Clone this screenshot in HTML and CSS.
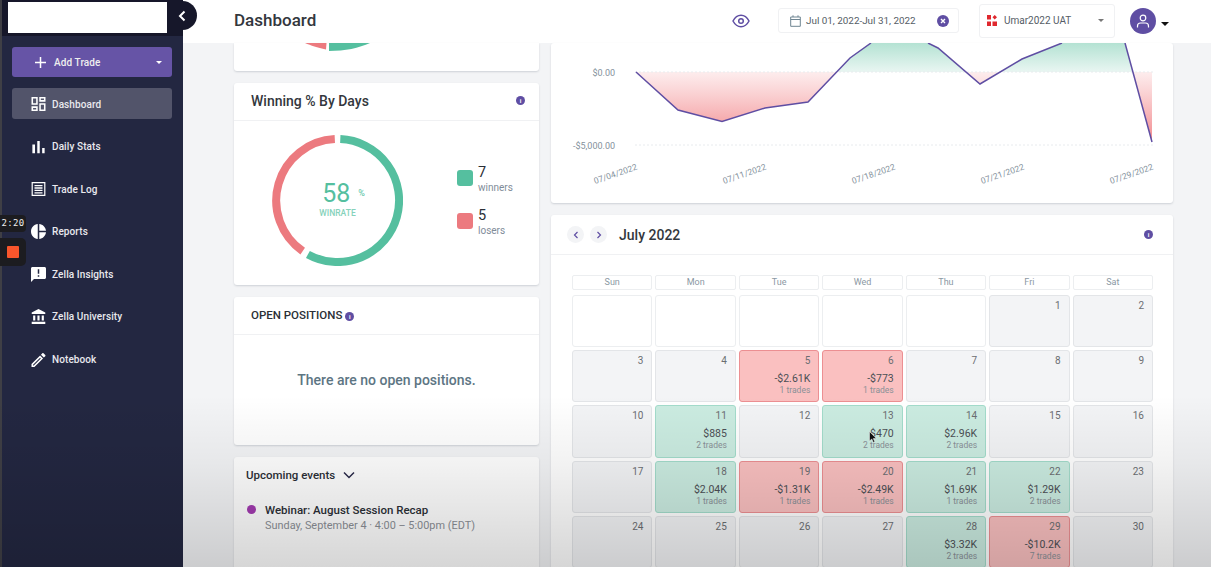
FILE: index.html
```html
<!DOCTYPE html>
<html lang="en">
<head>
  <meta charset="UTF-8">
  <title>Dashboard</title>
  <link rel="stylesheet" href="styles.css">
</head>
<body>
  <div class="app">
    <aside class="sidebar">
      <div class="brand">
        <div class="logo"></div>
        <button class="collapse">
          <svg width="10" height="12" viewBox="0 0 10 12"><path d="M7.5 1.5 3 6l4.500 4.500" fill="none" stroke="#fff" stroke-width="2"/></svg>
        </button>
      </div>
      <nav class="nav">
        <div class="add-trade">
          <svg width="11" height="11" viewBox="0 0 11 11"><path d="M5.500 0v11M0 5.500h11" stroke="#fff" stroke-width="1.500"/></svg>
          <span>Add Trade</span>
          <i class="caret"></i>
        </div>
        <a class="nav-item active">
          <svg width="14" height="14" viewBox="3 3 18 18" class="nav-icon"><path d="M19 5v2h-4V5h4M9 5v6H5V5h4m10 8v6h-4v-6h4M9 17v2H5v-2h4M21 3h-8v6h8V3zM11 3H3v10h8V3zm10 8h-8v10h8V11zm-10 4H3v6h8v-6z" fill="#fff"/></svg>
          Dashboard
        </a>
        <a class="nav-item">
          <svg width="14" height="14" viewBox="4 4 16 16" class="nav-icon"><path d="M5 9.200h3V19H5zM10.600 5h2.800v14h-2.800zm5.600 8H19v6h-2.800z" fill="#fff"/></svg>
          Daily Stats
        </a>
        <a class="nav-item">
          <svg width="14" height="14" viewBox="0 0 14 14" class="nav-icon"><path d="M.7.7h12.600v12.600H.7z" fill="none" stroke="#fff" stroke-width="1.200"/><path d="M3 3.600h8M3 6h8M3 8.400h8M3 10.800h8" stroke="#fff" stroke-width="1.300"/></svg>
          Trade Log
        </a>
        <a class="nav-item">
          <svg width="15" height="15" viewBox="2 2 20 20" class="nav-icon"><path d="M11 2v20c-5.070-.500-9-4.790-9-10s3.930-9.500 9-10zm2.030 0v8.990H22c-.470-4.740-4.240-8.520-8.970-8.990zm0 11.010V22c4.740-.470 8.500-4.250 8.970-8.990h-8.970z" fill="#fff"/></svg>
          Reports
        </a>
        <a class="nav-item">
          <svg width="15" height="15" viewBox="2 2 20 20" class="nav-icon"><path d="M20 2H4c-1.100 0-1.990.900-1.990 2L2 22l4-4h14c1.100 0 2-.900 2-2V4c0-1.100-.900-2-2-2zm-7 9h-2V5h2v6zm0 4h-2v-2h2v2z" fill="#fff"/></svg>
          Zella Insights
        </a>
        <a class="nav-item">
          <svg width="15" height="15" viewBox="2 1 19 21" class="nav-icon"><path d="M4 10v7h3v-7H4zm6 0v7h3v-7h-3zM2 22h19v-3H2v3zm14-12v7h3v-7h-3zm-4.500-9L2 6v2h19V6l-9.500-5z" fill="#fff"/></svg>
          Zella University
        </a>
        <a class="nav-item">
          <svg width="14" height="14" viewBox="3 3 18 18" class="nav-icon"><path d="M14.060 9.020l.920.920L5.920 19H5v-.920l9.060-9.060M17.660 3c-.250 0-.510.100-.700.290l-1.830 1.830 3.750 3.750 1.830-1.830c.390-.390.390-1.020 0-1.410l-2.340-2.340c-.200-.200-.450-.290-.710-.290zm-3.600 3.190L3 17.250V21h3.750L17.810 9.940l-3.750-3.750z" fill="#fff"/></svg>
          Notebook
        </a>
      </nav>
    </aside>

    <div class="main">
      <header class="topbar">
        <h1>Dashboard</h1>
        <svg class="eye" width="18" height="14" viewBox="0 0 18 14"><path d="M1 7c2-3.800 4.800-5.700 8-5.700S15 3.200 17 7c-2 3.800-4.800 5.700-8 5.700S3 10.800 1 7z" fill="none" stroke="#5f4ea3" stroke-width="1.500"/><circle cx="9" cy="7" r="2.300" fill="none" stroke="#5f4ea3" stroke-width="1.500"/></svg>
        <div class="date-range">
          <svg width="11" height="12" viewBox="0 0 11 12"><path d="M.7 2h9.600v9.300H.7zM.7 4.500h9.600M3 .3V2M8 .3V2" fill="none" stroke="#6f8592" stroke-width="1"/></svg>
          <span>Jul 01, 2022-Jul 31, 2022</span>
          <svg class="clear" width="12" height="12" viewBox="0 0 12 12"><circle cx="6" cy="6" r="6" fill="#5f4ea3"/><path d="m4 4 4 4M8 4 4 8" stroke="#fff" stroke-width="1.400"/></svg>
        </div>
        <div class="account">
          <svg width="10" height="11" viewBox="0 0 10 11"><path d="M0 0h4v4.500H0zM0 6.500h4V11H0zM5.500 6.500H10V11H5.500zM7.700 0 10 2.300 7.700 4.600 5.500 2.300z" fill="#e0282e"/></svg>
          <span>Umar2022 UAT</span>
          <i class="caret dark"></i>
        </div>
        <div class="avatar">
          <svg width="14" height="14" viewBox="0 0 14 14"><circle cx="7" cy="4" r="2.800" fill="none" stroke="#fff" stroke-width="1.200"/><path d="M1.500 13.500V12c0-2 1.500-3 3-3h5c1.500 0 3 1 3 3v1.500" fill="none" stroke="#fff" stroke-width="1.200"/></svg>
        </div>
        <i class="caret black"></i>
      </header>

      <div class="content">
        <section class="col-left">
          <div class="card donut-tail">
            <svg width="305" height="8" viewBox="0 0 305 8"><path d="M95 8c16 0 30-3 41-8H95z" fill="#55bf9f"/><path d="M71 0c6 2.700 12 4.500 21 6.500l.5-6.500z" fill="#ec7a7f"/></svg>
          </div>

          <div class="card winning">
            <div class="card-head">
              <h2>Winning % By Days</h2>
              <i class="info">i</i>
            </div>
            <div class="winning-body">
              <div class="donut">
                <svg width="131" height="131" viewBox="0 0 131 131">
                  <path d="M68.300 4.100A61.500 61.500 0 1 1 35.900 119.400" fill="none" stroke="#55bf9f" stroke-width="8"/>
                  <path d="M30.700 116.100A61.500 61.500 0 0 1 62.800 4.100" fill="none" stroke="#ec7a7f" stroke-width="8"/>
                </svg>
                <div class="donut-label">
                  <div class="rate">58<small>%</small></div>
                  <div class="rate-name">WINRATE</div>
                </div>
              </div>
              <div class="legend">
                <div class="legend-row">
                  <i class="swatch green"></i>
                  <div><b>7</b><span>winners</span></div>
                </div>
                <div class="legend-row">
                  <i class="swatch red"></i>
                  <div><b>5</b><span>losers</span></div>
                </div>
              </div>
            </div>
          </div>

          <div class="card positions">
            <div class="card-head">
              <h3>OPEN POSITIONS <i class="info">i</i></h3>
            </div>
            <p class="empty">There are no open positions.</p>
          </div>

          <div class="card events">
            <div class="events-head">
              Upcoming events
              <svg width="12" height="8" viewBox="0 0 12 8"><path d="m1 1.500 5 5 5-5" fill="none" stroke="#2a2a4a" stroke-width="1.500"/></svg>
            </div>
            <div class="event">
              <i class="dot"></i>
              <div>
                <div class="event-name">Webinar: August Session Recap</div>
                <div class="event-time">Sunday, September 4 · 4:00 – 5:00pm (EDT)</div>
              </div>
            </div>
          </div>
        </section>

        <section class="col-right">
          <div class="card chart">
            <svg width="622" height="160" viewBox="0 0 622 160">
              <defs>
                <linearGradient id="redFill" gradientUnits="userSpaceOnUse" x1="0" y1="29" x2="0" y2="95">
                  <stop offset="0" stop-color="#f6a3a6" stop-opacity=".2"/>
                  <stop offset="1" stop-color="#f28f93"/>
                </linearGradient>
                <linearGradient id="greenFill" gradientUnits="userSpaceOnUse" x1="0" y1="0" x2="0" y2="29">
                  <stop offset="0" stop-color="#b4e2d3"/>
                  <stop offset="1" stop-color="#e9f6f2"/>
                </linearGradient>
              </defs>
              <path d="M85 29 127 67 171 78.500 214 65 257 59 286 29z" fill="url(#redFill)"/>
              <path d="M415 29 429 41 449 29zM582 29 601 99V29z" fill="url(#redFill)"/>
              <path d="M286 29 299 15 320 0H377L387 5 415 29zM449 29 471 16 511 0H574L582 29z" fill="url(#greenFill)"/>
              <path d="M84 29H602M84 102H602" stroke="#e8ebee" stroke-dasharray="2 2"/>
              <path d="M85 29 127 67 171 78.500 214 65 257 59 299 15 320 0M377 0 387 5 429 41 471 16 511 0M574 0 601 99" fill="none" stroke="#5f4ea3" stroke-width="1.500"/>
              <text x="64" y="33" text-anchor="end" class="axis">$0.00</text>
              <text x="64" y="106" text-anchor="end" class="axis">-$5,000.00</text>
              <text transform="translate(44 141) rotate(-19)" class="axis date">07/04/2022</text>
              <text transform="translate(173 141) rotate(-19)" class="axis date">07/11/2022</text>
              <text transform="translate(302 141) rotate(-19)" class="axis date">07/18/2022</text>
              <text transform="translate(431 141) rotate(-19)" class="axis date">07/21/2022</text>
              <text transform="translate(560 141) rotate(-19)" class="axis date">07/29/2022</text>
            </svg>
          </div>

          <div class="card calendar">
            <div class="cal-head">
              <button class="cal-nav"><svg width="6" height="8" viewBox="0 0 6 8"><path d="M4.500 1 1.500 4l3 3" fill="none" stroke="#5f4ea3" stroke-width="1.200"/></svg></button>
              <button class="cal-nav"><svg width="6" height="8" viewBox="0 0 6 8"><path d="m1.500 1 3 3-3 3" fill="none" stroke="#5f4ea3" stroke-width="1.200"/></svg></button>
              <h2>July 2022</h2>
              <i class="info">i</i>
            </div>
            <div class="cal-grid">
              <div class="dow">Sun</div><div class="dow">Mon</div><div class="dow">Tue</div><div class="dow">Wed</div><div class="dow">Thu</div><div class="dow">Fri</div><div class="dow">Sat</div>

              <div class="day blank"></div><div class="day blank"></div><div class="day blank"></div><div class="day blank"></div><div class="day blank"></div>
              <div class="day"><span class="num">1</span></div>
              <div class="day"><span class="num">2</span></div>

              <div class="day"><span class="num">3</span></div>
              <div class="day"><span class="num">4</span></div>
              <div class="day loss"><span class="num">5</span><span class="pnl">-$2.61K</span><span class="trades">1 trades</span></div>
              <div class="day loss"><span class="num">6</span><span class="pnl">-$773</span><span class="trades">1 trades</span></div>
              <div class="day"><span class="num">7</span></div>
              <div class="day"><span class="num">8</span></div>
              <div class="day"><span class="num">9</span></div>

              <div class="day"><span class="num">10</span></div>
              <div class="day win"><span class="num">11</span><span class="pnl">$885</span><span class="trades">2 trades</span></div>
              <div class="day"><span class="num">12</span></div>
              <div class="day win"><span class="num">13</span><span class="pnl">$470</span><span class="trades">2 trades</span></div>
              <div class="day win"><span class="num">14</span><span class="pnl">$2.96K</span><span class="trades">2 trades</span></div>
              <div class="day"><span class="num">15</span></div>
              <div class="day"><span class="num">16</span></div>

              <div class="day"><span class="num">17</span></div>
              <div class="day win"><span class="num">18</span><span class="pnl">$2.04K</span><span class="trades">1 trades</span></div>
              <div class="day loss"><span class="num">19</span><span class="pnl">-$1.31K</span><span class="trades">1 trades</span></div>
              <div class="day loss"><span class="num">20</span><span class="pnl">-$2.49K</span><span class="trades">1 trades</span></div>
              <div class="day win"><span class="num">21</span><span class="pnl">$1.69K</span><span class="trades">1 trades</span></div>
              <div class="day win"><span class="num">22</span><span class="pnl">$1.29K</span><span class="trades">2 trades</span></div>
              <div class="day"><span class="num">23</span></div>

              <div class="day"><span class="num">24</span></div>
              <div class="day"><span class="num">25</span></div>
              <div class="day"><span class="num">26</span></div>
              <div class="day"><span class="num">27</span></div>
              <div class="day win"><span class="num">28</span><span class="pnl">$3.32K</span><span class="trades">2 trades</span></div>
              <div class="day loss"><span class="num">29</span><span class="pnl">-$10.2K</span><span class="trades">7 trades</span></div>
              <div class="day"><span class="num">30</span></div>
            </div>
            <svg class="cursor" width="8" height="12" viewBox="0 0 8 12"><path d="M.5.500v9.500l2.300-2 1.500 3.500 1.500-.700-1.500-3.300H7.300z" fill="#111" stroke="#fff" stroke-width=".5"/></svg>
          </div>
        </section>
      </div>
    </div>

    <div class="fade"></div>

    <div class="recorder">
      <span class="rec-time">2:20</span>
      <span class="rec-stop"><i></i></span>
    </div>
  </div>
</body>
</html>
```

FILE: styles.css
```css
html, body {
  margin: 0;
  padding: 0;
  height: 100%;
  overflow: hidden;
  font-family: Roboto, "Noto Sans", sans-serif;
  color: #2b2f36;
  background-color: #f3f4f6;
}

.app {
  position: relative;
  display: flex;
  height: 567px;
}

h1, h2, h3, p {
  margin: 0;
  font-weight: 400;
}

button {
  border: none;
  padding: 0;
}

/* sidebar */
.sidebar {
  position: relative;
  width: 181px;
  flex: none;
  border-left: 2px solid #3f3f45;
  background-color: #232741;
  z-index: 2;
}

.brand {
  position: relative;
  height: 36px;
  padding: 2px 0 0 6px;
  box-sizing: border-box;
  background-color: #16172a;
}

.logo {
  width: 159px;
  height: 31px;
  background-color: #fff;
}

.collapse {
  position: absolute;
  top: 1px;
  right: -14px;
  width: 30px;
  height: 29px;
  border-radius: 0 15px 15px 0;
  background-color: #16172a;
  display: flex;
  align-items: center;
  justify-content: center;
}

.nav {
  padding: 11px 11px 0 10px;
}

.add-trade {
  display: flex;
  align-items: center;
  height: 30px;
  padding-left: 23px;
  margin-bottom: 11px;
  border-radius: 3px;
  background-color: #6654a6;
  color: #eee;
  font-size: 10px;
  font-weight: 500;
}

.add-trade svg {
  margin-right: 8px;
}

.add-trade span {
  flex: 1;
  letter-spacing: .1px;
}

.caret {
  display: inline-block;
  width: 0;
  height: 0;
  border: 3px solid transparent;
  border-top-color: #fff;
  border-bottom: 0;
  margin-right: 10px;
}

.caret.dark {
  border-top-color: #777;
  margin: 0;
}

.caret.black {
  border-width: 4px 4px 0;
  border-top-color: #111;
  margin: 4px 0 0 5px;
}

.nav-item {
  display: flex;
  align-items: center;
  height: 31px;
  box-sizing: border-box;
  padding: 1px 0 0 19px;
  margin-bottom: 11.6px;
  border-radius: 3px;
  color: #e9e9ee;
  font-size: 10px;
  font-weight: 500;
  letter-spacing: .1px;
}

.nav-item.active {
  background-color: #52546a;
}

.nav-icon {
  width: 15px;
  margin-right: 6px;
}

.recorder {
  position: absolute;
  left: 0;
  top: 215px;
  width: 26px;
  z-index: 4;
}

.rec-time {
  display: block;
  height: 17px;
  border-radius: 0 4px 4px 0;
  background-color: #1c1c20;
  color: #eee;
  font-family: "DejaVu Sans Mono", monospace;
  font-size: 9px;
  line-height: 17px;
  text-align: center;
  letter-spacing: .3px;
}

.rec-stop {
  display: flex;
  align-items: center;
  justify-content: center;
  height: 28px;
  margin-top: 6px;
  padding-right: 1px;
  border-radius: 0 5px 5px 0;
  background-color: #1c1c20;
}

.rec-stop i {
  width: 12px;
  height: 12px;
  border-radius: 1px;
  background-color: #f9562c;
}

/* main */
.main {
  position: relative;
  flex: 1;
  min-width: 0;
  display: flex;
  flex-direction: column;
  overflow: hidden;
}

.topbar {
  height: 43px;
  flex: none;
  display: flex;
  align-items: center;
  padding-left: 51px;
  background-color: #fff;
}

.topbar h1 {
  font-size: 17px;
  font-weight: 500;
  width: 498px;
  margin-top: -4px;
  color: #33373d;
}

.eye {
  margin: 0 28px 1px 0;
}

.date-range {
  display: flex;
  align-items: center;
  width: 181px;
  height: 25px;
  box-sizing: border-box;
  margin: -2px 20px 0 0;
  padding: 0 9px 0 11px;
  border: 1px solid #f0f1f3;
  border-radius: 3px;
  font-size: 9.9px;
  color: #555d66;
}

.date-range span {
  flex: 1;
  margin-left: 5px;
}

.account {
  display: flex;
  align-items: center;
  width: 136px;
  height: 34px;
  box-sizing: border-box;
  margin: -2px 15px 0 0;
  padding: 0 10px 0 7px;
  border: 1px solid #f0f1f3;
  border-radius: 3px;
  font-size: 10px;
  color: #555d66;
}

.account span {
  flex: 1;
  margin-left: 7px;
}

.avatar {
  width: 26px;
  height: 26px;
  border-radius: 50%;
  background-color: #5f4ea3;
  display: flex;
  align-items: center;
  justify-content: center;
  margin-top: -2px;
}

.content {
  flex: 1;
  min-height: 0;
  display: flex;
  gap: 12px;
  padding-left: 51px;
}

.col-left {
  width: 305px;
  flex: none;
}

.col-right {
  width: 622px;
  flex: none;
}

.card {
  background-color: #fff;
  border-radius: 3px;
  box-shadow: 0 1px 2px rgba(60, 70, 90, .2);
  margin-bottom: 12px;
}

.donut-tail {
  height: 28px;
  border-radius: 0 0 3px 3px;
}

.donut-tail svg {
  display: block;
}

.card-head {
  display: flex;
  align-items: center;
  justify-content: space-between;
  height: 38px;
  box-sizing: border-box;
  padding: 0 14px 2px 17px;
  border-bottom: 1px solid #f0f1f3;
}

.card-head h2 {
  font-size: 14px;
  font-weight: 500;
  color: #33373d;
}

.card-head h3 {
  font-size: 11.5px;
  font-weight: 500;
  color: #2b2f36;
}

.info {
  display: inline-flex;
  align-items: center;
  justify-content: center;
  width: 9px;
  height: 9px;
  border-radius: 50%;
  background-color: #5f4ea3;
  color: #fff;
  font-size: 6px;
  font-style: normal;
  font-weight: 700;
  vertical-align: 0;
}

.winning {
  height: 202px;
}

.winning-body {
  display: flex;
  align-items: flex-start;
  padding: 14px 0 0 38px;
}

.donut {
  position: relative;
  width: 131px;
  height: 131px;
  margin-right: 54px;
}

.donut svg {
  display: block;
}

.donut-label {
  position: absolute;
  inset: 44px 0 0 0;
  text-align: center;
  color: #55bf9f;
}

.rate {
  font-size: 25px;
  line-height: 28px;
  padding-left: 12px;
}

.rate small {
  font-size: 9px;
  vertical-align: 6px;
  margin-left: 8px;
}

.rate-name {
  font-size: 8.5px;
  font-weight: 500;
  color: #86d2bb;
}

.legend {
  margin-top: 30px;
}

.legend-row {
  display: flex;
  align-items: flex-start;
  gap: 5px;
  height: 43px;
  color: #7f8c99;
  font-size: 10px;
}

.legend-row b {
  display: block;
  font-size: 14.5px;
  font-weight: 400;
  line-height: 15px;
  color: #2b2f36;
}

.legend-row span {
  display: block;
  line-height: 15px;
}

.swatch {
  width: 16px;
  height: 16px;
  margin-top: 5px;
  border-radius: 3px;
}

.swatch.green {
  background-color: #55bf9f;
}

.swatch.red {
  background-color: #ec7a7f;
}

.positions {
  height: 148px;
}

.positions .card-head {
  justify-content: flex-start;
}

.empty {
  margin-top: 37px;
  text-align: center;
  font-size: 14px;
  font-weight: 500;
  color: #5d7583;
}

.events {
  height: 130px;
  padding: 11px 12px 0;
  box-sizing: border-box;
}

.events-head {
  display: flex;
  align-items: center;
  gap: 8px;
  font-size: 11.5px;
  font-weight: 500;
  color: #2b2f36;
}

.event {
  display: flex;
  align-items: flex-start;
  gap: 9px;
  margin-top: 21px;
}

.dot {
  width: 9px;
  height: 9px;
  margin: 2px 0 0 1px;
  border-radius: 50%;
  background-color: #a23bb0;
}

.event-name {
  font-size: 11.5px;
  font-weight: 500;
  line-height: 15px;
}

.event-time {
  margin-top: 1px;
  font-size: 10.9px;
  color: #8b8f96;
}

.chart {
  height: 160px;
}

.chart svg {
  display: block;
}

.axis {
  font-family: Roboto, sans-serif;
  font-size: 9px;
  fill: #84919c;
}

.axis.date {
  font-size: 8.5px;
}

.calendar {
  position: relative;
  height: 360px;
}

.cal-head {
  display: flex;
  align-items: center;
  height: 40px;
  box-sizing: border-box;
  padding: 0 20px 0 16px;
  border-bottom: 1px solid #f0f1f3;
}

.cal-nav {
  width: 17px;
  height: 17px;
  margin-right: 6px;
  border-radius: 50%;
  background-color: #f3f4f6;
  display: flex;
  align-items: center;
  justify-content: center;
}

.cal-head h2 {
  flex: 1;
  margin-left: 6px;
  font-size: 14px;
  font-weight: 500;
  color: #33373d;
}

.cal-grid {
  display: grid;
  grid-template-columns: repeat(7, 1fr);
  grid-template-rows: 17px repeat(5, 52.2px);
  gap: 3px;
  width: 581px;
  margin: 20px 0 0 21px;
}

.dow {
  height: 15px;
  box-sizing: border-box;
  border: 1px solid #eceef0;
  border-radius: 2px;
  background-color: #fff;
  font-size: 9px;
  line-height: 13px;
  text-align: center;
  color: #8b98a3;
}

.day {
  display: flex;
  flex-direction: column;
  align-items: flex-end;
  padding: 3px 8px 0 0;
  border: 1px solid #e3e5e8;
  border-radius: 3px;
  background-color: #f3f4f6;
  box-sizing: border-box;
}

.day.blank {
  background-color: #fff;
  border-color: #eceef0;
}

.day.loss {
  background-color: #fac0c0;
  border-color: #ec8f92;
}

.day.win {
  background-color: #cbece1;
  border-color: #a3dccb;
}

.num {
  font-size: 10px;
  line-height: 13px;
  color: #6b6e72;
}

.pnl {
  margin-top: 5px;
  font-size: 10.5px;
  line-height: 13px;
  color: #4b4f55;
}

.trades {
  font-size: 8.5px;
  line-height: 11px;
  color: #8a9097;
}

.cursor {
  position: absolute;
  left: 318px;
  top: 216px;
}

/* dark fade along the bottom of the page */
.fade {
  position: absolute;
  left: 0;
  right: 0;
  top: 395px;
  bottom: 0;
  z-index: 3;
  background: linear-gradient(to bottom, rgba(0, 0, 0, 0), rgba(0, 0, 0, .05) 40%, rgba(0, 0, 0, .16));
  pointer-events: none;
}
```
